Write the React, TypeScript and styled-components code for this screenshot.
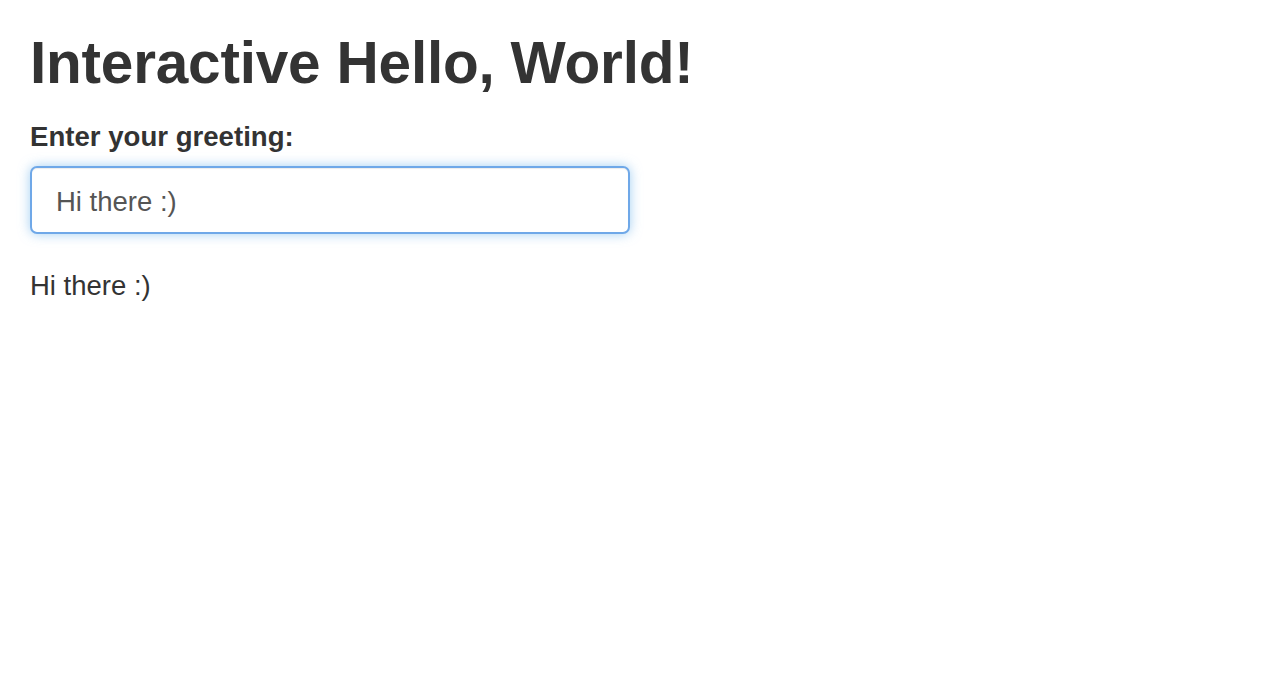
import React, { useState } from "react";
import styled, { createGlobalStyle } from "styled-components";

const GlobalStyle = createGlobalStyle`
  html, body {
    margin: 0;
    padding: 0;
    background: #fff;
  }
  body {
    font-family: "Liberation Sans", Arial, Helvetica, sans-serif;
    color: #333;
  }
`;

const Page = styled.div`
  display: flex;
  flex-direction: column;
  align-items: flex-start;
  padding: 30px 30px;
`;

const Title = styled.h1`
  margin: 0 0 22px;
  font-size: 58.5px;
  font-weight: 700;
  line-height: 66px;
  color: #333;
  letter-spacing: -0.2px;
`;

const Field = styled.div`
  display: flex;
  flex-direction: column;
  gap: 11px;
  width: 600px;
`;

const Label = styled.label`
  font-size: 27.6px;
  font-weight: 700;
  line-height: 37px;
  color: #333;
`;

const Input = styled.input`
  box-sizing: border-box;
  width: 100%;
  height: 68px;
  padding: 3px 24px 0;
  border: 2px solid #6fa8e8;
  border-radius: 7px;
  font-family: inherit;
  font-size: 27.5px;
  color: #555;
  background: #fff;
  outline: none;
  box-shadow: inset 0 1px 1px rgba(0, 0, 0, 0.075),
    0 0 12px rgba(102, 175, 233, 0.6);
`;

const Output = styled.div`
  margin-top: 33px;
  font-size: 27.5px;
  line-height: 37px;
  color: #333;
`;

export default function App() {
  const [greeting, setGreeting] = useState("Hi there :)");

  return (
    <>
      <GlobalStyle />
      <Page>
        <Title>Interactive Hello, World!</Title>
        <Field>
          <Label htmlFor="greeting">Enter your greeting:</Label>
          <Input
            id="greeting"
            value={greeting}
            onChange={(e) => setGreeting(e.target.value)}
          />
        </Field>
        <Output>{greeting}</Output>
      </Page>
    </>
  );
}
